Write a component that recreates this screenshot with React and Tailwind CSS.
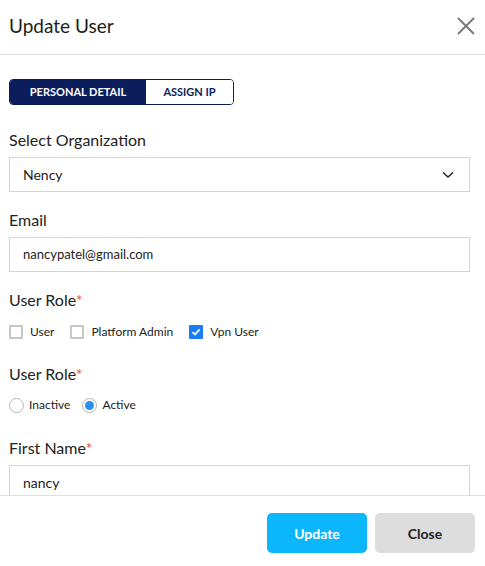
import React from 'react';

const Label = ({ children, required }) => (
  <div className="text-[16px] text-[#222] leading-5 font-['Lato',sans-serif]">
    {children}
    {required && <span className="text-[#e5484d]">*</span>}
  </div>
);

const Checkbox = ({ label, checked }) => (
  <label className="flex items-center gap-[7px]">
    {checked ? (
      <span className="w-[14px] h-[14px] bg-[#1a7cf2] rounded-[1px] flex items-center justify-center">
        <svg width="10" height="10" viewBox="0 0 10 10">
          <path d="M1.5 5.2 L4 7.5 L8.6 2.4" fill="none" stroke="white" strokeWidth="1.8" />
        </svg>
      </span>
    ) : (
      <span className="w-[14px] h-[14px] border-2 border-[#c6c6c6] rounded-[1px] bg-white" />
    )}
    <span className="text-[12px] text-[#222]">{label}</span>
  </label>
);

const Radio = ({ label, checked }) => (
  <label className="flex items-center gap-[5px]">
    <span className="w-[15px] h-[15px] rounded-full border border-[#b5b5b5] bg-white flex items-center justify-center">
      {checked && <span className="w-[9px] h-[9px] rounded-full bg-[#2f8fee]" />}
    </span>
    <span className="text-[12px] text-[#222]">{label}</span>
  </label>
);

export default function App() {
  return (
    <div className="w-[485px] h-[566px] bg-white flex flex-col overflow-hidden font-['Lato',sans-serif]">
      {/* Header */}
      <div className="h-[55px] shrink-0 border-b border-[#dedee3] flex items-center justify-between pl-[9px] pr-[10px]">
        <h2 className="text-[19px] text-[#1c1c1c] pb-[1px]">Update User</h2>
        <svg width="18" height="18" viewBox="0 0 18 18" className="mb-[2px]">
          <path d="M1 1 L17 17 M17 1 L1 17" stroke="#777" strokeWidth="1.8" />
        </svg>
      </div>

      {/* Body */}
      <div className="flex-1 min-h-0 overflow-hidden pl-[9px] pr-[15px] pt-[23px]">
        <div className="inline-flex h-[26px] rounded-[4px] border border-[#0c1d5c] overflow-hidden text-[11px] font-bold">
          <div className="w-[136px] bg-[#0c1d5c] text-white flex items-center justify-center">PERSONAL DETAIL</div>
          <div className="w-[87px] bg-white text-[#0c1d5c] flex items-center justify-center">ASSIGN IP</div>
        </div>

        <div className="mt-[25px]">
          <Label>Select Organization</Label>
          <div className="mt-[7px] h-[35px] border border-[#d4d4d4] flex items-center justify-between pl-[13px] pr-[15px]">
            <span className="text-[14px] text-[#222]">Nency</span>
            <svg width="12" height="8" viewBox="0 0 12 8">
              <path d="M1 1.5 L6 6 L11 1.5" fill="none" stroke="#222" strokeWidth="1.5" />
            </svg>
          </div>
        </div>

        <div className="mt-[18px]">
          <Label>Email</Label>
          <div className="mt-[7px] h-[35px] border border-[#d4d4d4] flex items-center pl-[13px]">
            <span className="text-[13px] text-[#222]">nancypatel@gmail.com</span>
          </div>
        </div>

        <div className="mt-[18px]">
          <Label required>User Role</Label>
          <div className="mt-[13px] flex items-center gap-[16px]">
            <Checkbox label="User" />
            <Checkbox label="Platform Admin" />
            <Checkbox label="Vpn User" checked />
          </div>
        </div>

        <div className="mt-[23px]">
          <Label required>User Role</Label>
          <div className="mt-[12px] flex items-center gap-[12px]">
            <Radio label="Inactive" />
            <Radio label="Active" checked />
          </div>
        </div>

        <div className="mt-[24px]">
          <Label required>First Name</Label>
          <div className="mt-[7px] h-[35px] border border-[#d4d4d4] flex items-center pl-[13px]">
            <span className="text-[14px] text-[#222]">nancy</span>
          </div>
        </div>
      </div>

      {/* Footer */}
      <div className="h-[71px] shrink-0 border-t border-[#dedee3] flex items-start justify-end gap-[8px] pt-[17px] pr-[10px]">
        <button className="w-[100px] h-[40px] rounded-[5px] bg-[#0bb6fd] text-white text-[14px] font-bold">Update</button>
        <button className="w-[100px] h-[40px] rounded-[5px] bg-[#dddddd] text-[#222] text-[14px] font-bold">Close</button>
      </div>
    </div>
  );
}
